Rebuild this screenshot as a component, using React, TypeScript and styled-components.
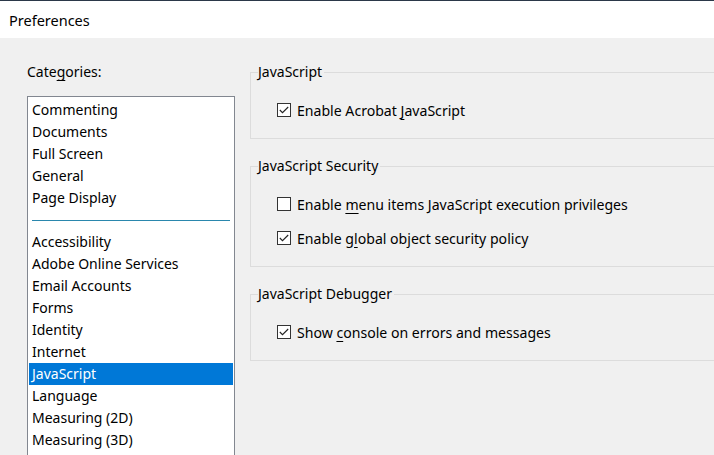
import { Fragment } from 'react';
import styled, { createGlobalStyle } from 'styled-components';

const GlobalStyle = createGlobalStyle`
  html, body {
    margin: 0;
    padding: 0;
    width: 714px;
    height: 455px;
    overflow: hidden;
    background: #f0f0f0;
  }
  body {
    font-family: 'Noto Sans', 'Open Sans', sans-serif;
    font-size: 14px;
    color: #000;
  }
`;

const StyledWindow = styled.div`
  width: 714px;
  height: 455px;
  display: flex;
  flex-direction: column;
  overflow: hidden;
`;

const StyledTitleBar = styled.div`
  height: 37px;
  flex: none;
  background: #fff;
  border-top: 1px solid #2b3849;
  display: flex;
  align-items: center;
  padding-left: 9px;
  font-size: 14.5px;
`;

const StyledBody = styled.div`
  flex: 1;
  display: flex;
  gap: 15px;
  padding: 24px 0 0 27px;
  min-height: 0;
`;

const StyledLeft = styled.div`
  width: 208px;
  flex: none;
  display: flex;
  flex-direction: column;
`;

const StyledLabel = styled.div`
  line-height: 20px;
  height: 20px;
  margin-bottom: 14px;
`;

const Key = styled.u`
  text-decoration-thickness: 1px;
  text-underline-offset: 3px;
`;

const StyledList = styled.div`
  border: 1px solid #828790;
  background: #fff;
  padding: 2px 1px 1px;
  height: 440px;
  flex: none;
  box-sizing: border-box;
`;

const StyledItem = styled.div<{ $selected?: boolean }>`
  height: 22px;
  line-height: 22px;
  padding-left: 3px;
  white-space: nowrap;
  background: ${(p) => (p.$selected ? '#0078d7' : 'transparent')};
  color: ${(p) => (p.$selected ? '#fff' : '#000')};
`;

const StyledDivider = styled.div`
  height: 22px;
  display: flex;
  align-items: center;
  padding: 0 3px;

  &::after {
    content: '';
    flex: 1;
    height: 1px;
    background: #2a87ad;
  }
`;

const StyledRight = styled.div`
  flex: 1;
  margin-right: -40px;
  display: flex;
  flex-direction: column;
  gap: 17px;
`;

const StyledGroup = styled.fieldset`
  margin: 0;
  padding: 0 0 16px 26px;
  border: 1px solid #dcdcdc;
  min-inline-size: 0;
`;

const StyledLegend = styled.legend`
  line-height: 20px;
  padding: 0 2px 0 0;
  margin-left: -19px;
`;

const StyledRows = styled.div`
  padding-top: 17px;
  padding-bottom: 1px;
  display: flex;
  flex-direction: column;
  gap: 12px;
`;

const StyledRow = styled.label`
  height: 22px;
  display: flex;
  align-items: center;
  gap: 6px;
  white-space: nowrap;
  font-size: 14.1px;
`;

const StyledBox = styled.span`
  width: 14px;
  height: 14px;
  border: 1px solid #333;
  background: #fff;
  box-sizing: border-box;
  display: inline-flex;
  align-items: center;
  justify-content: center;
  flex: none;
`;

const Checkbox = ({ checked }: { checked: boolean }) => (
  <StyledBox>
    {checked && (
      <svg width='12' height='12' viewBox='0 0 12 12'>
        <polyline points='1.8,6 4.5,8.7 10.2,3' fill='none' stroke='#222' strokeWidth='1.1' />
      </svg>
    )}
  </StyledBox>
);

const topItems = ['Commenting', 'Documents', 'Full Screen', 'General', 'Page Display'];
const bottomItems = [
  'Accessibility',
  'Adobe Online Services',
  'Email Accounts',
  'Forms',
  'Identity',
  'Internet',
  'JavaScript',
  'Language',
  'Measuring (2D)',
  'Measuring (3D)',
];

type Option = { before: string; key: string; after: string; checked: boolean };

const groups: { title: string; options: Option[] }[] = [
  {
    title: 'JavaScript',
    options: [{ before: 'Enable Acrobat ', key: 'J', after: 'avaScript', checked: true }],
  },
  {
    title: 'JavaScript Security',
    options: [
      { before: 'Enable ', key: 'm', after: 'enu items JavaScript execution privileges', checked: false },
      { before: 'Enable g', key: 'l', after: 'obal object security policy', checked: true },
    ],
  },
  {
    title: 'JavaScript Debugger',
    options: [{ before: 'Show ', key: 'c', after: 'onsole on errors and messages', checked: true }],
  },
];

export default function App() {
  return (
    <StyledWindow>
      <GlobalStyle />
      <StyledTitleBar>Preferences</StyledTitleBar>
      <StyledBody>
        <StyledLeft>
          <StyledLabel>
            Cate<Key>g</Key>ories:
          </StyledLabel>
          <StyledList>
            {topItems.map((item) => (
              <StyledItem key={item}>{item}</StyledItem>
            ))}
            <StyledDivider />
            {bottomItems.map((item) => (
              <StyledItem key={item} $selected={item === 'JavaScript'}>
                {item}
              </StyledItem>
            ))}
          </StyledList>
        </StyledLeft>
        <StyledRight>
          {groups.map((group) => (
            <StyledGroup key={group.title}>
              <StyledLegend>{group.title}</StyledLegend>
              <StyledRows>
                {group.options.map((opt) => (
                  <StyledRow key={opt.after}>
                    <Checkbox checked={opt.checked} />
                    <span>
                      <Fragment>{opt.before}</Fragment>
                      <Key>{opt.key}</Key>
                      {opt.after}
                    </span>
                  </StyledRow>
                ))}
              </StyledRows>
            </StyledGroup>
          ))}
        </StyledRight>
      </StyledBody>
    </StyledWindow>
  );
}
